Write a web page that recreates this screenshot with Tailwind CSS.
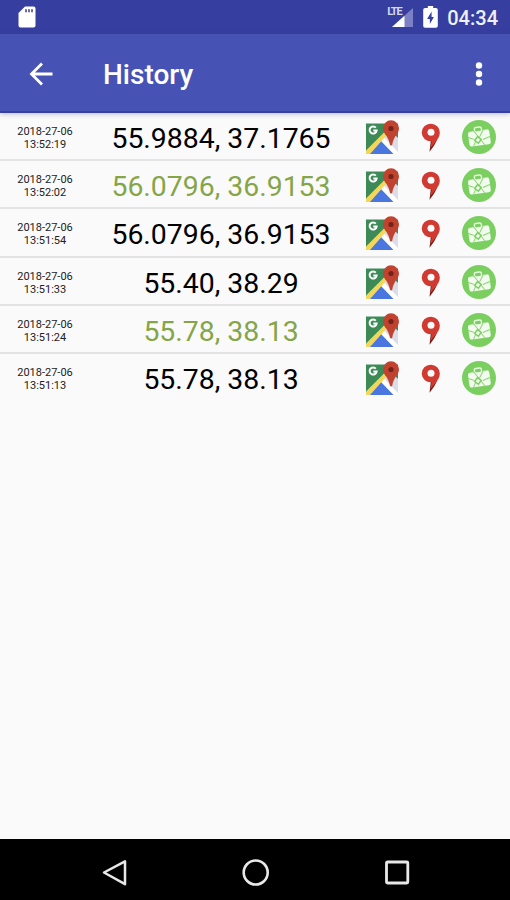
<!DOCTYPE html>
<html lang="en">

<head>
    <meta charset="UTF-8">
    <meta name="viewport" content="width=device-width, initial-scale=1.0">
    <title>History</title>

    <!--Tailwind library-->
    <script src="https://cdn.jsdelivr.net/npm/@tailwindcss/browser@4"></script>
</head>

<body class="w-[510px] h-[900px] flex flex-col overflow-hidden bg-[#fafafa] font-[Roboto,sans-serif]">
    <!--Shared icons for the rows-->
    <svg class="hidden">
        <symbol id="googleMaps" viewBox="0 0 34 34">
            <clipPath id="mapClip"><rect x="0.500" y="3.500" width="31" height="30" rx="2"/></clipPath>
            <g clip-path="url(#mapClip)">
                <path fill="#3c8b57" d="M0 3.500h32v30H0z"/>
                <path fill="#dcdde6" d="M16 18l8-8 8 8v16H16z"/>
                <path fill="#4a76e0" d="M3 34l13-15L28 34z"/>
                <path fill="#fff" d="M14 20l3-3.500L32 32v2h-4.500z"/>
                <path fill="#f3d75a" d="M0 30.500L18.500 12l1.500 4L4 34H0z"/>
            </g>
            <path fill="none" stroke="#fff" stroke-width="2" d="M9.800 7.700A3.500 3.500 0 1 0 10.600 10.500H7.300"/>
            <path fill="#c0432f" d="M25 .3a8 8 0 0 1 8 8c0 6-5.400 7.500-6.700 16.300-.3 1.200-2.100 1.200-2.400 0C22.600 15.800 17 14.300 17 8.300a8 8 0 0 1 8-8z"/>
            <circle cx="25" cy="8.500" r="2.600" fill="#74221a"/>
        </symbol>
        <symbol id="yandexMaps" viewBox="0 0 20 30">
            <path fill="#7d1f1b" d="M16.500 15c-1.500 5-4.500 9.500-8 13.700l1.300-11z"/>
            <path fill="#d13a31" d="M10 .7a8.800 8.800 0 0 1 8.800 8.800c0 3.800-1.800 6.500-4.300 9.500L9.300 25l1.400-6.800A8.800 8.800 0 1 1 10 .7z"/>
            <circle cx="10" cy="9.300" r="3.500" fill="#fafafa"/>
        </symbol>
        <symbol id="mapsMe" viewBox="0 0 34 34">
            <circle cx="17" cy="17" r="17" fill="#7bcf60"/>
            <g transform="rotate(-8 17 17)">
                <path fill="none" stroke="#e4f7dd" stroke-width="1.500" d="M13.500 11V8.700q0-1.500 1.500-1.500h4q1.500 0 1.500 1.500V11"/>
                <rect x="6.500" y="10.500" width="21.500" height="15" rx="2.500" fill="#f1fbee"/>
                <path fill="none" stroke="#8ed477" stroke-width="1" d="M12.500 10l9.500 16M22.500 10l-5 7M10 26l3-5M6 16l5.500 2.500M28 18l-7.500 2"/>
                <path fill="#f1fbee" stroke="#7bcf60" stroke-width="1.500" d="M15.500 16.500l3.300 3.300-3.300 3.300-3.300-3.300z"/>
                <path stroke="#7bcf60" stroke-width="1.200" d="M14.500 10.500h5"/>
            </g>
        </symbol>
    </svg>

    <!--Status bar-->
    <div class="h-[34px] shrink-0 flex items-center bg-[#363f9f] pl-[18px] pr-[12px]">
        <svg class="w-[18px] h-[22px]" viewBox="0 0 18 22">
            <path fill="#fff" d="M7 .5h8.500A2 2 0 0 1 17.500 2.500v17a2 2 0 0 1-2 2h-13a2 2 0 0 1-2-2V7z"/>
            <path fill="#686b9c" d="M7 3.200h2v3H7zM10 3.200h2v3h-2zM13 3.200h2v3h-2z"/>
        </svg>
        <div class="ml-auto flex items-center">
            <!--Mobile signal-->
            <div class="relative w-[27px] h-[22px]">
                <svg class="w-full h-full" viewBox="0 0 27 22">
                    <path fill="#7b81c4" d="M27 2v19H6z"/>
                    <path fill="#fff" d="M18.500 9.700V21H6z"/>
                </svg>
                <span class="absolute left-[1px] top-0 bg-[#363f9f] text-[11px] leading-[11px] font-bold tracking-[-1.2px] text-[#d5d8ef] pr-px">LTE</span>
            </div>
            <svg class="ml-[10px] w-[15px] h-[22px]" viewBox="0 0 14 22" preserveAspectRatio="none">
                <path fill="#fff" d="M4.500 0h5v2H12a1.800 1.800 0 0 1 1.800 1.800V20a1.800 1.800 0 0 1-1.800 1.800H2A1.800 1.800 0 0 1 .2 20V3.800A1.800 1.800 0 0 1 2 2h2.500z"/>
                <path fill="#363f9f" d="M8 5.500L3.800 13h2.600v5L10.200 11H8z"/>
            </svg>
            <span class="ml-[9px] mt-[2px] text-[20px] leading-[22px] font-medium text-[#eff0fa]">04:34</span>
        </div>
    </div>

    <!--App bar-->
    <div class="h-[79px] shrink-0 relative flex items-center bg-[#4753b4] border-b-2 border-[#363fa4] shadow-[0_1px_5px_rgba(60,60,130,0.35)] pl-[29px] pr-[27px] pt-[2px]">
        <svg class="w-[24px] h-[24px]" viewBox="0 0 24 24" fill="none" stroke="#fff" stroke-width="2.800">
            <path d="M23.500 12H3M13 1.500L2.500 12 13 22.500"/>
        </svg>
        <h1 class="ml-[50px] mt-[3px] text-[28px] leading-[32px] font-medium text-white">History</h1>
        <svg class="ml-auto w-[8px] h-[24px]" viewBox="0 0 8 24" fill="#fff">
            <circle cx="4" cy="3.500" r="3.200"/>
            <circle cx="4" cy="12" r="3.200"/>
            <circle cx="4" cy="20.500" r="3.200"/>
        </svg>
    </div>

    <!--History list-->
    <div class="flex-1 flex flex-col text-black">
        <div class="h-[48.2px] flex items-start border-b-2 border-[#e3e3e3]">
            <p class="w-[90px] pt-[12px] text-center text-[11px] leading-[13px] text-[#222]">2018-27-06<br>13:52:19</p>
            <p class="w-[262px] pt-[10px] text-center text-[28.400px] leading-[32px]">55.9884, 37.1765</p>
            <svg class="ml-[14px] mt-[7px] w-[34px] h-[34px]"><use href="#googleMaps"/></svg>
            <svg class="ml-[21px] mt-[10px] w-[20px] h-[30px]"><use href="#yandexMaps"/></svg>
            <svg class="ml-[21px] mt-[7px] w-[34px] h-[34px]"><use href="#mapsMe"/></svg>
        </div>
        <div class="h-[48.2px] flex items-start border-b-2 border-[#e3e3e3]">
            <p class="w-[90px] pt-[12px] text-center text-[11px] leading-[13px] text-[#222]">2018-27-06<br>13:52:02</p>
            <p class="w-[262px] pt-[10px] text-center text-[28.400px] leading-[32px] text-[#86a548]">56.0796, 36.9153</p>
            <svg class="ml-[14px] mt-[7px] w-[34px] h-[34px]"><use href="#googleMaps"/></svg>
            <svg class="ml-[21px] mt-[10px] w-[20px] h-[30px]"><use href="#yandexMaps"/></svg>
            <svg class="ml-[21px] mt-[7px] w-[34px] h-[34px]"><use href="#mapsMe"/></svg>
        </div>
        <div class="h-[48.2px] flex items-start border-b-2 border-[#e3e3e3]">
            <p class="w-[90px] pt-[12px] text-center text-[11px] leading-[13px] text-[#222]">2018-27-06<br>13:51:54</p>
            <p class="w-[262px] pt-[10px] text-center text-[28.400px] leading-[32px]">56.0796, 36.9153</p>
            <svg class="ml-[14px] mt-[7px] w-[34px] h-[34px]"><use href="#googleMaps"/></svg>
            <svg class="ml-[21px] mt-[10px] w-[20px] h-[30px]"><use href="#yandexMaps"/></svg>
            <svg class="ml-[21px] mt-[7px] w-[34px] h-[34px]"><use href="#mapsMe"/></svg>
        </div>
        <div class="h-[48.2px] flex items-start border-b-2 border-[#e3e3e3]">
            <p class="w-[90px] pt-[12px] text-center text-[11px] leading-[13px] text-[#222]">2018-27-06<br>13:51:33</p>
            <p class="w-[262px] pt-[10px] text-center text-[28.400px] leading-[32px]">55.40, 38.29</p>
            <svg class="ml-[14px] mt-[7px] w-[34px] h-[34px]"><use href="#googleMaps"/></svg>
            <svg class="ml-[21px] mt-[10px] w-[20px] h-[30px]"><use href="#yandexMaps"/></svg>
            <svg class="ml-[21px] mt-[7px] w-[34px] h-[34px]"><use href="#mapsMe"/></svg>
        </div>
        <div class="h-[48.2px] flex items-start border-b-2 border-[#e3e3e3]">
            <p class="w-[90px] pt-[12px] text-center text-[11px] leading-[13px] text-[#222]">2018-27-06<br>13:51:24</p>
            <p class="w-[262px] pt-[10px] text-center text-[28.400px] leading-[32px] text-[#86a548]">55.78, 38.13</p>
            <svg class="ml-[14px] mt-[7px] w-[34px] h-[34px]"><use href="#googleMaps"/></svg>
            <svg class="ml-[21px] mt-[10px] w-[20px] h-[30px]"><use href="#yandexMaps"/></svg>
            <svg class="ml-[21px] mt-[7px] w-[34px] h-[34px]"><use href="#mapsMe"/></svg>
        </div>
        <div class="h-[48.2px] flex items-start">
            <p class="w-[90px] pt-[12px] text-center text-[11px] leading-[13px] text-[#222]">2018-27-06<br>13:51:13</p>
            <p class="w-[262px] pt-[10px] text-center text-[28.400px] leading-[32px]">55.78, 38.13</p>
            <svg class="ml-[14px] mt-[7px] w-[34px] h-[34px]"><use href="#googleMaps"/></svg>
            <svg class="ml-[21px] mt-[10px] w-[20px] h-[30px]"><use href="#yandexMaps"/></svg>
            <svg class="ml-[21px] mt-[7px] w-[34px] h-[34px]"><use href="#mapsMe"/></svg>
        </div>
    </div>

    <!--Navigation bar-->
    <div class="h-[61px] shrink-0 flex items-center justify-between bg-black pl-[101px] pr-[99px] pt-[6px]">
        <svg class="w-[28px] h-[28px]" viewBox="0 0 28 28" fill="none" stroke="#e8e8e8" stroke-width="2.500" stroke-linejoin="round">
            <path d="M3 13.500L24 2.300v22.900z"/>
        </svg>
        <svg class="w-[28px] h-[28px]" viewBox="0 0 28 28" fill="none" stroke="#e8e8e8" stroke-width="2.600">
            <circle cx="13.700" cy="13.500" r="12"/>
        </svg>
        <svg class="w-[28px] h-[28px]" viewBox="0 0 28 28" fill="none" stroke="#e8e8e8" stroke-width="2.800">
            <rect x="3.500" y="3" width="21.300" height="21" rx="1"/>
        </svg>
    </div>
</body>

</html>
